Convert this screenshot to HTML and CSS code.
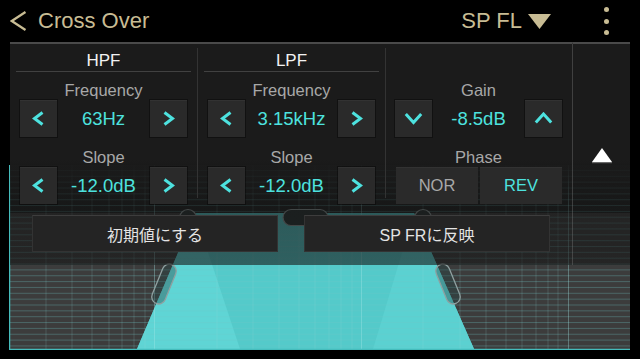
FILE: index.html
```html
<!DOCTYPE html>
<html lang="ja">
<head>
<meta charset="utf-8">
<title>Cross Over</title>
<link rel="stylesheet" href="styles.css">
</head>
<body>
<header class="topbar">
  <div class="back">
    <svg class="back-icon" width="17" height="20" viewBox="0 0 17 20"><polyline points="15.5,1 1.8,10 15.5,19"/></svg>
    <span class="title">Cross Over</span>
  </div>
  <div class="channel">
    <span>SP FL</span>
    <svg width="23" height="15" viewBox="0 0 23 15"><polygon points="0,0 23,0 11.5,15"/></svg>
  </div>
  <div class="kebab"><i></i><i></i><i></i></div>
</header>

<main class="stage">
  <svg class="graph" width="621" height="185" viewBox="9 165 621 185">
    <defs>
      <pattern id="hlines" patternUnits="userSpaceOnUse" x="0" y="0.3" width="10" height="5.85">
        <rect x="0" y="0" width="10" height="1" fill="rgba(110,200,200,0.3)"/>
      </pattern>
    </defs>
    <rect x="9" y="165" width="621" height="185" fill="#1c1e1e"/>
    <rect x="9" y="213" width="621" height="137" fill="#3c3c3c"/>
    <polygon points="195,213 414,213 474,349 137,349" fill="#54caca"/>
    <polygon points="195,213 137,349 240,349" fill="#5fd5d5"/>
    <polygon points="414,213 474,349 373,349" fill="#5bd1d1"/>
    <rect x="9" y="165" width="621" height="185" fill="url(#hlines)"/>
    <path d="M46 165V349M72 165V349M92 165V349M109 165V349M122 165V349M134 165V349M145 165V349M217 165V349M253 165V349M279 165V349M299 165V349M315 165V349M329 165V349M341 165V349M352 165V349M423 165V349M460 165V349M486 165V349M506 165V349M522 165V349M536 165V349M548 165V349M558 165V349" stroke="rgba(160,230,230,0.18)" stroke-width="1" fill="none"/>
    <path d="M154.5 165V349M361.5 165V349M568.5 165V349" stroke="rgba(170,235,235,0.34)" stroke-width="1" fill="none"/>
    <circle cx="188" cy="218" r="8.5" fill="#263030" stroke="#8a9696" stroke-width="1.2"/>
    <rect x="283" y="209.5" width="45" height="16" rx="8" fill="#263030" stroke="#8a9696" stroke-width="1.2"/>
    <circle cx="423" cy="218" r="8.5" fill="#263030" stroke="#8a9696" stroke-width="1.2"/>
    <rect x="-7" y="-21" width="14" height="42" rx="7" transform="translate(164,284) rotate(22)" fill="rgba(40,70,70,0.4)" stroke="#8fa0a0" stroke-width="1.3"/>
    <rect x="-7" y="-21" width="14" height="42" rx="7" transform="translate(448,284) rotate(-22)" fill="rgba(40,70,70,0.4)" stroke="#8fa0a0" stroke-width="1.3"/>
    <path d="M9.5 165V349.5H630" stroke="#45bcbc" stroke-width="1.5" fill="none"/>
  </svg>

  <div class="controls">
    <section class="panel">
      <div class="columns">
        <div class="col">
          <div class="col-head">HPF</div>
          <div class="label">Frequency</div>
          <div class="stepper">
            <button class="step"><svg width="13" height="15" viewBox="0 0 13 15"><polyline points="10.5,1.5 2.5,7.5 10.5,13.5"/></svg></button>
            <span class="value">63Hz</span>
            <button class="step"><svg width="13" height="15" viewBox="0 0 13 15"><polyline points="2.5,1.5 10.5,7.5 2.5,13.5"/></svg></button>
          </div>
          <div class="label second">Slope</div>
          <div class="stepper">
            <button class="step"><svg width="13" height="15" viewBox="0 0 13 15"><polyline points="10.5,1.5 2.5,7.5 10.5,13.5"/></svg></button>
            <span class="value">-12.0dB</span>
            <button class="step"><svg width="13" height="15" viewBox="0 0 13 15"><polyline points="2.5,1.5 10.5,7.5 2.5,13.5"/></svg></button>
          </div>
        </div>
        <div class="vsep"></div>
        <div class="col">
          <div class="col-head">LPF</div>
          <div class="label">Frequency</div>
          <div class="stepper">
            <button class="step"><svg width="13" height="15" viewBox="0 0 13 15"><polyline points="10.5,1.5 2.5,7.5 10.5,13.5"/></svg></button>
            <span class="value">3.15kHz</span>
            <button class="step"><svg width="13" height="15" viewBox="0 0 13 15"><polyline points="2.5,1.5 10.5,7.5 2.5,13.5"/></svg></button>
          </div>
          <div class="label second">Slope</div>
          <div class="stepper">
            <button class="step"><svg width="13" height="15" viewBox="0 0 13 15"><polyline points="10.5,1.5 2.5,7.5 10.5,13.5"/></svg></button>
            <span class="value">-12.0dB</span>
            <button class="step"><svg width="13" height="15" viewBox="0 0 13 15"><polyline points="2.5,1.5 10.5,7.5 2.5,13.5"/></svg></button>
          </div>
        </div>
        <div class="vsep"></div>
        <div class="col gain">
          <div class="col-head blank"></div>
          <div class="label">Gain</div>
          <div class="stepper">
            <button class="step"><svg width="19" height="13" viewBox="0 0 19 13"><polyline points="1.8,2 9.5,10.5 17.2,2"/></svg></button>
            <span class="value">-8.5dB</span>
            <button class="step"><svg width="19" height="13" viewBox="0 0 19 13"><polyline points="1.8,10.5 9.5,2 17.2,10.5"/></svg></button>
          </div>
          <div class="label second">Phase</div>
          <div class="segment">
            <button class="seg">NOR</button>
            <button class="seg on">REV</button>
          </div>
        </div>
      </div>
      <div class="actions">
        <button class="action">初期値にする</button>
        <button class="action">SP FRに反映</button>
      </div>
    </section>
    <aside class="side">
      <svg class="up" width="22" height="17" viewBox="0 0 22 17"><polygon points="1,15 21,15 11,1" fill="#fff"/><rect x="1" y="15" width="20" height="1.2" fill="#6a6a6a"/></svg>
    </aside>
  </div>
</main>
</body>
</html>
```

FILE: styles.css
```css
* { box-sizing: border-box; }

html, body {
  margin: 0;
  padding: 0;
}

body {
  width: 640px;
  height: 359px;
  overflow: hidden;
  background: #000;
  font-family: "Liberation Sans", Arial, "Noto Sans CJK JP", sans-serif;
}

/* ---------- top bar ---------- */
.topbar {
  display: flex;
  align-items: center;
  height: 42px;
  padding-left: 10px;
  color: #c8bc94;
}

.back {
  display: flex;
  align-items: center;
  gap: 11px;
}

.back-icon { display: block; }

.back-icon polyline {
  fill: none;
  stroke: #c8bc94;
  stroke-width: 2.2;
}

.title {
  font-size: 22px;
  line-height: 26px;
}

.channel {
  margin-left: auto;
  display: flex;
  align-items: center;
  gap: 6px;
  font-size: 22px;
  line-height: 26px;
}

.channel svg { display: block; }
.channel polygon { fill: #c8bc94; }

.kebab {
  display: flex;
  flex-direction: column;
  gap: 6.5px;
  margin: 0 31px 0 53px;
}

.kebab i {
  display: block;
  width: 5px;
  height: 5px;
  border-radius: 50%;
  background: #c8bc94;
}

/* ---------- stage ---------- */
.stage {
  position: relative;
  height: 317px;
}

.graph {
  position: absolute;
  left: 9px;
  top: 123px;
  display: block;
}

.controls {
  position: relative;
  display: flex;
  height: 223px;
  padding-left: 10px;
}

.panel,
.side {
  border-top: 2px solid #4a4a4a;
  background: linear-gradient(to bottom,
    #1b1b1b 0px,
    #1b1b1b 116px,
    rgba(20, 20, 20, 0.62) 160px,
    rgba(20, 20, 20, 0.58) 100%);
}

.panel {
  width: 562px;
  display: flex;
  flex-direction: column;
}

.side {
  width: 58px;
  border-left: 1px solid rgba(120, 120, 120, 0.4);
  display: flex;
  align-items: center;
  justify-content: center;
  padding-top: 2px;
}

.up { display: block; }

/* ---------- columns ---------- */
.columns {
  display: flex;
}

.col {
  width: 187px;
  padding: 0 10px;
  display: flex;
  flex-direction: column;
}

.col.gain {
  width: 186px;
  padding: 0 10px 0 9px;
}

.vsep {
  width: 1px;
  height: 150px;
  margin-top: 4px;
  background: #333;
}

.col-head {
  margin: 0 -4px;
  height: 28px;
  padding-top: 7px;
  line-height: 20px;
  text-align: center;
  font-size: 17px;
  color: #f2f2f2;
  border-bottom: 1px solid #414141;
}

.col-head.blank { border-bottom-color: transparent; }

.label {
  margin-top: 8px;
  height: 20px;
  line-height: 20px;
  text-align: center;
  font-size: 16.5px;
  color: #a8a8a8;
}

.label.second { margin-top: 10px; }

.stepper {
  display: flex;
  align-items: center;
  height: 37px;
}

button {
  margin: 0;
  padding: 0;
  border: none;
  font: inherit;
}

.step {
  width: 37px;
  height: 37px;
  flex: none;
  display: flex;
  align-items: center;
  justify-content: center;
  background: #2a2a2a;
  box-shadow: inset 0 1px 0 rgba(255, 255, 255, 0.04), 0 0 0 1px rgba(0, 0, 0, 0.35);
}

.step svg { display: block; }

.step polyline {
  fill: none;
  stroke: #4de2df;
  stroke-width: 3;
  stroke-linejoin: miter;
}

.value {
  flex: 1;
  text-align: center;
  font-size: 18.5px;
  color: #4de2df;
}

.segment {
  display: flex;
  gap: 2px;
  height: 37px;
  padding-left: 1px;
}

.seg {
  flex: 1;
  background: #2a2a2a;
  font-size: 16.5px;
  color: #a8a8a8;
  box-shadow: inset 0 1px 0 rgba(255, 255, 255, 0.04);
}

.seg.on { color: #4de2df; }

/* ---------- actions ---------- */
.actions {
  display: flex;
  gap: 26px;
  margin-top: 11px;
  padding: 0 22px;
}

.action {
  flex: 1;
  height: 37px;
  background: #242424;
  border: 1px solid #333;
  border-top-color: #3d3d3d;
  font-family: "Liberation Sans", "Noto Sans CJK JP", sans-serif;
  font-size: 16px;
  color: #e4e4e4;
}
```
